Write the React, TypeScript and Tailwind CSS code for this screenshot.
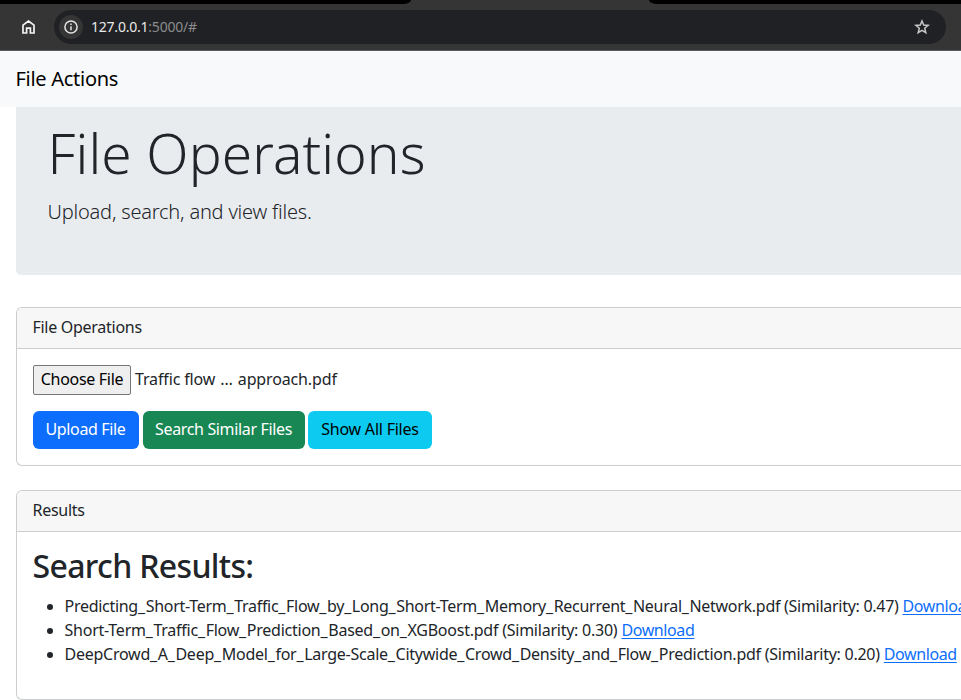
import type { ReactNode } from "react";

const results = [
  { name: "Predicting_Short-Term_Traffic_Flow_by_Long_Short-Term_Memory_Recurrent_Neural_Network.pdf", score: "0.47", spacing: "tracking-[-0.285px]" },
  { name: "Short-Term_Traffic_Flow_Prediction_Based_on_XGBoost.pdf", score: "0.30", spacing: "tracking-[-0.24px]" },
  { name: "DeepCrowd_A_Deep_Model_for_Large-Scale_Citywide_Crowd_Density_and_Flow_Prediction.pdf", score: "0.20", spacing: "tracking-[-0.25px]" },
];

function BrowserBar() {
  return (
    <div className="flex h-[51px] shrink-0 flex-col border-b border-[#5c5c5c] bg-[#353535]">
      <div className="flex h-1 justify-between">
        <div className="w-[411px] rounded-br-[8px_4px] bg-black" />
        <div className="w-[312px] rounded-bl-[8px_4px] bg-black" />
      </div>
      <div className="flex items-center pt-1.5">
        <svg className="ml-[21.5px] mr-[19.5px] h-[14px] w-[13px]" viewBox="0 0 13 14" fill="none" stroke="#f4f4f4" strokeWidth="1.7">
          <path d="M1 5.1 6.5 1 12 5.1V13H8.4V8.2H4.6V13H1Z" />
        </svg>
        <div className="flex h-[34px] w-[892px] items-center rounded-full bg-[#202124]">
          <span className="ml-[5px] flex size-6 items-center justify-center rounded-full bg-[#353535]">
            <svg className="size-[14px]" viewBox="0 0 14 14" fill="none" stroke="#e3e3e3" strokeWidth="1.5">
              <circle cx="7" cy="7" r="6.1" />
              <path d="M7 6.3v4M7 3.6v1.5" />
            </svg>
          </span>
          <span className="ml-2 flex-1 text-sm tracking-[-0.22px] text-[#8b8c8e]">
            <span className="text-[#e8e8e8]">127.0.0.1</span>:5000/#
          </span>
          <svg className="mr-[16px] size-[16px]" viewBox="0 0 16 16" fill="none" stroke="#c7c7c7" strokeWidth="1.5">
            <path d="M8 2 9.7 6.1 14.1 6.4 10.7 9.3 11.8 13.6 8 11.3 4.2 13.6 5.3 9.3 1.9 6.4 6.3 6.1Z" />
          </svg>
        </div>
      </div>
    </div>
  );
}

function Card({ title, className, children }: { title: string; className: string; children: ReactNode }) {
  return (
    <section className={`ml-4 shrink-0 rounded-l-md border border-r-0 border-[#cccdce] ${className}`}>
      <div className="h-[41px] rounded-tl-[5px] border-b border-[#cccdce] bg-[#f7f7f7] px-[15.5px] pt-[7px] leading-6 tracking-[-0.28px]">
        {title}
      </div>
      {children}
    </section>
  );
}

function FileName({ name }: { name: string }) {
  return name.split("_").map((part, index) => (
    <span key={index}>
      {index > 0 && <span className="tracking-[0.6px]">_</span>}
      {part}
    </span>
  ));
}

export default function App() {
  return (
    <div className="flex h-[700px] w-full flex-col overflow-hidden bg-white font-['Noto_Sans',sans-serif] text-base text-[#212529]">
      <BrowserBar />
      <nav className="h-14 shrink-0 bg-[#f8f9fa] px-[15.5px] pt-[13px] text-xl leading-[30px] tracking-[-0.28px] text-black">
        File Actions
      </nav>
      <header className="ml-4 h-[168px] shrink-0 rounded-bl-[5px] bg-[#e9ecef] px-[31.5px] pt-3">
        <h1 className="text-[55px] leading-[67px] font-light tracking-[0.13px]">File Operations</h1>
        <p className="mt-[11px] text-xl leading-[30px] font-light tracking-[-0.2px]">Upload, search, and view files.</p>
      </header>
      <Card title="File Operations" className="mt-8 h-[159px]">
        <div className="px-4 pt-4">
          <div className="flex items-center gap-1">
            <button className="h-[30px] w-[98px] rounded-[2px] border border-[#767676] bg-[#efefef] px-0 pb-[3px] tracking-[-0.3px] whitespace-nowrap text-black">Choose File</button>
            <span className="-mt-[2px] tracking-[-0.14px]">Traffic flow <span className="px-[1px]">…</span> approach.pdf</span>
          </div>
          <div className="mt-4 flex whitespace-nowrap">
            <button className="h-[38px] w-[106px] rounded-md bg-[#0d6efd] pr-px pb-[2px] tracking-[-0.35px] text-white">Upload File</button>
            <button className="ml-1 h-[38px] w-[162px] rounded-md bg-[#198754] pr-px pb-[2px] tracking-[-0.35px] text-white">Search Similar Files</button>
            <button className="ml-[3px] h-[38px] w-[124px] rounded-md bg-[#0dcaf0] pb-[2px] tracking-[-0.22px] text-black">Show All Files</button>
          </div>
        </div>
      </Card>
      <Card title="Results" className="mt-6 h-[210px]">
        <div className="px-4 pt-4">
          <h2 className="-mt-px -ml-[0.5px] text-[32px] leading-[38px] font-medium tracking-[-0.65px]">Search Results:</h2>
          <ul className="mt-[9px] list-disc pl-[31.5px] leading-6 whitespace-nowrap">
            {results.map((file) => (
              <li key={file.name}>
                <span className={file.spacing}><FileName name={file.name} /> (Similarity: {file.score})</span>
                <a className="ml-1 tracking-[-0.4px] text-[#0d6efd] underline underline-offset-2" href="#">Download</a>
              </li>
            ))}
          </ul>
        </div>
      </Card>
    </div>
  );
}
